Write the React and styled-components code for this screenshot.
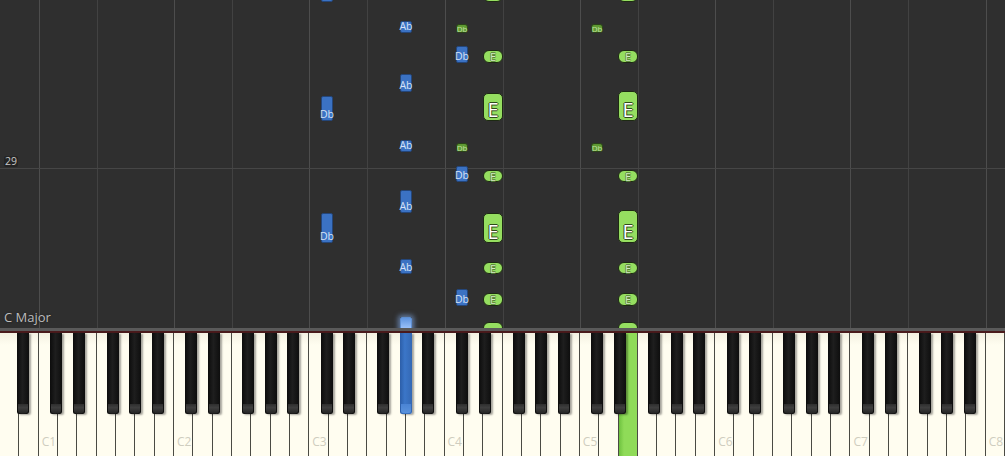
import React from "react";
import styled, { createGlobalStyle, css } from "styled-components";

const W = 1005 / 52;
const ROLL_H = 328;

const GlobalStyle = createGlobalStyle`
  html, body { margin: 0; padding: 0; background: #2f2f2f; overflow: hidden; }
  #root { width: 1005px; height: 456px; }
`;

const Screen = styled.div`
  width: 1005px;
  height: 456px;
  display: flex;
  flex-direction: column;
  font-family: "Open Sans", "Liberation Sans", sans-serif;
  overflow: hidden;
`;

const Roll = styled.div`
  position: relative;
  height: ${ROLL_H}px;
  flex: none;
  display: flex;
  flex-direction: column;
  justify-content: flex-end;
  align-items: flex-start;
  padding: 0 0 3px 4px;
  box-sizing: border-box;
  background: #2f2f2f;
  overflow: hidden;
`;

const VLine = styled.div`
  position: absolute;
  top: 0;
  bottom: 0;
  width: 1px;
  background: ${(p) => (p.$strong ? "#4d4d4d" : "#424242")};
`;

const HLine = styled.div`
  position: absolute;
  left: 0;
  right: 0;
  height: 1px;
  background: #464646;
`;

const MeasureNum = styled.div`
  position: absolute;
  left: 4px;
  top: 156px;
  padding: 0 1px;
  font-size: 10.5px;
  line-height: 11px;
  color: #c8c8c8;
  background: #242424;
  border-radius: 2px;
`;

const KeyName = styled.div`
  position: relative;
  font-size: 13px;
  line-height: 16px;
  color: #bdbdbd;
  text-shadow: 0 0 2px #1a1a1a;
`;

const NoteBase = styled.div`
  position: absolute;
  box-sizing: border-box;
  display: flex;
  justify-content: center;
  align-items: flex-end;
  white-space: nowrap;
  overflow: visible;
`;

const BlueNote = styled(NoteBase)`
  width: 12px;
  background: #3b72c3;
  border: 1px solid #24467a;
  border-radius: 2px;
  font-size: 10.5px;
  line-height: 11px;
  color: #d6e2f7;
  ${(p) =>
    p.$glow &&
    css`
      background: linear-gradient(#5f95e0, #a4c9ff);
      box-shadow: 0 0 5px 2px rgba(140, 185, 255, 0.55);
      border-color: #5f8fd0;
    `}
`;

const GreenNote = styled(NoteBase)`
  width: 20px;
  background: #95de60;
  border: 1px solid #1d2a12;
  border-radius: ${(p) => (p.$big ? 5 : 6)}px;
  align-items: center;
  ${(p) =>
    p.$big
      ? css`
          align-items: flex-end;
          font-size: 20px;
          line-height: 20px;
          color: #ffffff;
          text-shadow: -1px 0 #2f4a1a, 1px 0 #2f4a1a, 0 -1px #2f4a1a, 0 1px #2f4a1a;
        `
      : css`
          font-size: 11px;
          line-height: 11px;
          color: #d4ebc0;
          text-shadow: -0.6px 0 #55803a, 0.6px 0 #55803a, 0 -0.6px #55803a, 0 0.6px #55803a;
        `}
`;

const GreenSmall = styled(NoteBase)`
  width: 12px;
  height: 9px;
  background: #5f9a33;
  border: 1px solid #2b4418;
  border-radius: 3px;
  align-items: center;
  font-size: 8px;
  line-height: 8px;
  color: #c0e0a2;
`;

const KeyboardTop = styled.div`
  height: 3px;
  flex: none;
  background: #5a5a5a;
  border-bottom: 2px solid #4a1a1c;
`;

const Keyboard = styled.div`
  position: relative;
  flex: 1;
  display: flex;
  background: #fffdf0;
`;

const WhiteKey = styled.div`
  position: relative;
  flex: 1 1 0;
  box-sizing: border-box;
  border-right: 1px solid #4a4a44;
  background: ${(p) =>
    p.$lit
      ? "linear-gradient(90deg, #6fc23f 0px, #8fdb58 5px, #8fdb58 100%)"
      : "linear-gradient(#f4f1e2, #fffdf0 12px)"};
`;

const OctaveLabel = styled.span`
  position: absolute;
  left: 3px;
  bottom: 7px;
  font-size: 12px;
  line-height: 14px;
  color: #cfcdbf;
`;

const BlackKey = styled.div`
  position: absolute;
  top: 0;
  width: 12px;
  height: 81px;
  box-sizing: border-box;
  border-radius: 0 0 2px 2px;
  box-shadow: 2px 1px 2px rgba(0, 0, 0, 0.35);
  background: ${(p) =>
    p.$lit
      ? "linear-gradient(90deg, #2c5ea8, #3b76c8 40%, #3468b4)"
      : "linear-gradient(90deg, #0c0c0c, #1e1e1e 45%, #0e0e0e)"};
  &::after {
    content: "";
    position: absolute;
    left: 1px;
    right: 1px;
    bottom: 1px;
    height: 9px;
    border-radius: 0 0 2px 2px;
    background: ${(p) =>
      p.$lit
        ? "linear-gradient(#4a84d4, #5a92dc)"
        : "linear-gradient(#2e2e2e, #3e3e3e 40%, #262626)"};
  }
`;

// geometry helpers
const cX = (oct) => (2 + 7 * (oct - 1)) * W;
const BLACK_OFF = { Db: 11.5, Eb: 34.2, Gb: 68.2, Ab: 90.8, Bb: 113.2 };
const blackX = (name, oct) => cX(oct) + BLACK_OFF[name];
const whiteX = (idx) => idx * W;

const E4X = whiteX(25);
const E5X = whiteX(32);

const blueNotes = [
  { n: "Db", o: 3, y: -20, h: 22, noLabel: true },
  { n: "Ab", o: 3, y: 21, h: 12 },
  { n: "Db", o: 4, y: 46, h: 17 },
  { n: "Ab", o: 3, y: 74, h: 18 },
  { n: "Db", o: 3, y: 96, h: 25 },
  { n: "Ab", o: 3, y: 140, h: 12 },
  { n: "Db", o: 4, y: 166, h: 16 },
  { n: "Ab", o: 3, y: 190, h: 23 },
  { n: "Db", o: 3, y: 213, h: 30 },
  { n: "Ab", o: 3, y: 259, h: 15 },
  { n: "Db", o: 4, y: 289, h: 17 },
  { n: "Ab", o: 3, y: 317, h: 14, glow: true, noLabel: true },
];

const smallGreen = [24, 143];

const greenRows = [
  { y: -20, h: 22, noLabel: true },
  { y: 50, h: 13 },
  { y: 93, h: 28, big: true, y5: 90.5, h5: 30.5 },
  { y: 170, h: 12 },
  { y: 213, h: 30, big: true, y5: 210, h5: 33 },
  { y: 262, h: 12 },
  { y: 293, h: 13 },
  { y: 322, h: 12, noLabel: true },
];

const vLines = [];
for (let o = 1; o <= 8; o++) {
  vLines.push({ x: cX(o), strong: true });
  if (o < 8) vLines.push({ x: cX(o) + 3 * W, strong: false });
}

const whiteKeys = Array.from({ length: 52 }, (_, i) => {
  const rel = (i - 2 + 70) % 7;
  const oct = Math.floor((i - 2) / 7) + 1;
  return { i, isC: rel === 0, oct };
});

const blackKeys = [{ x: 16.6, lit: false }];
for (let o = 1; o <= 7; o++) {
  Object.keys(BLACK_OFF).forEach((n) => {
    blackKeys.push({ x: blackX(n, o), lit: n === "Ab" && o === 3 });
  });
}

export default function App() {
  return (
    <Screen>
      <GlobalStyle />
      <Roll>
        {vLines.map((l, k) => (
          <VLine key={k} $strong={l.strong} style={{ left: Math.round(l.x) }} />
        ))}
        <HLine style={{ top: 168 }} />
        <MeasureNum>29</MeasureNum>

        {blueNotes.map((b, k) => (
          <BlueNote
            key={"b" + k}
            $glow={b.glow}
            style={{ left: Math.round(blackX(b.n, b.o)), top: b.y, height: b.h }}
          >
            {b.noLabel ? "" : b.n}
          </BlueNote>
        ))}

        {smallGreen.map((y, k) => (
          <React.Fragment key={"s" + k}>
            <GreenSmall style={{ left: Math.round(blackX("Db", 4)), top: y }}>Db</GreenSmall>
            <GreenSmall style={{ left: Math.round(blackX("Db", 5)), top: y }}>Db</GreenSmall>
          </React.Fragment>
        ))}

        {greenRows.map((g, k) => (
          <React.Fragment key={"g" + k}>
            <GreenNote $big={g.big} style={{ left: Math.round(E4X), top: g.y, height: g.h }}>
              {g.noLabel ? "" : "E"}
            </GreenNote>
            <GreenNote
              $big={g.big}
              style={{ left: Math.round(E5X), top: g.y5 ?? g.y, height: g.h5 ?? g.h }}
            >
              {g.noLabel ? "" : "E"}
            </GreenNote>
          </React.Fragment>
        ))}

        <KeyName>C Major</KeyName>
      </Roll>
      <KeyboardTop />
      <Keyboard>
        {whiteKeys.map((k) => (
          <WhiteKey key={k.i} $lit={k.i === 32}>
            {k.isC && <OctaveLabel>C{k.oct}</OctaveLabel>}
          </WhiteKey>
        ))}
        {blackKeys.map((b, k) => (
          <BlackKey key={k} $lit={b.lit} style={{ left: Math.round(b.x) }} />
        ))}
      </Keyboard>
    </Screen>
  );
}
